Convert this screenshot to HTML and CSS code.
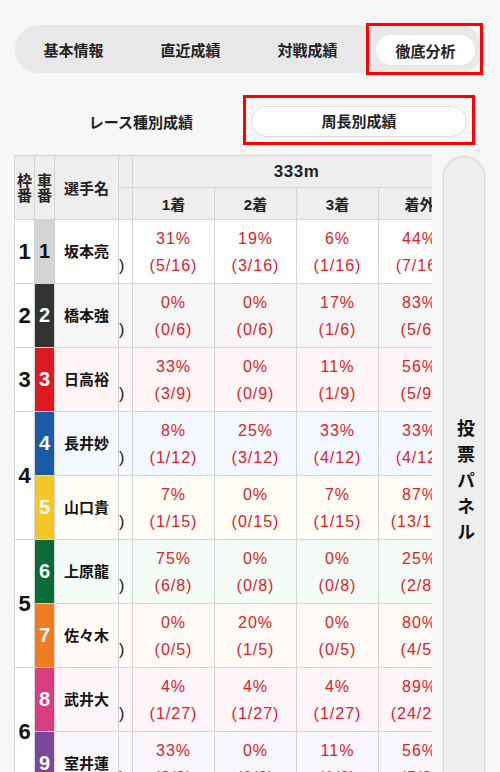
FILE: index.html
```html
<!DOCTYPE html>
<html lang="ja">
<head>
    <meta charset="UTF-8">
    <meta name="viewport" content="width=device-width, initial-scale=1.0">
    <title>徹底分析</title>
    <link rel="stylesheet" href="styles.css">
</head>
<body>
    <div class="tabs">
        <div class="tab">基本情報</div>
        <div class="tab">直近成績</div>
        <div class="tab">対戦成績</div>
        <div class="tab"><span class="tab-active marked">徹底分析</span></div>
    </div>
    <div class="subtabs">
        <div class="sub-label">レース種別成績</div>
        <div class="sub-pill marked2">周長別成績</div>
    </div>
    <div class="main">
        <div class="table-wrap">
            <table class="stats">
                <colgroup>
                    <col class="w-frame">
                    <col class="w-car">
                    <col class="w-name">
                    <col class="w-prev">
                    <col class="w-data">
                    <col class="w-data">
                    <col class="w-data">
                    <col class="w-data">
                </colgroup>
                <thead>
                    <tr class="h1">
                        <th rowspan="2" class="th-small">枠<br>番</th>
                        <th rowspan="2" class="th-small">車<br>番</th>
                        <th rowspan="2" class="th-name">選手名</th>
                        <th></th>
                        <th colspan="4" class="th-dist">333m</th>
                    </tr>
                    <tr class="h2">
                        <th></th>
                        <th>1着</th>
                        <th>2着</th>
                        <th>3着</th>
                        <th>着外</th>
                    </tr>
                </thead>
                <tbody>
                    <tr class="t1">
                        <td class="frame">1</td>
                        <td class="car c1">1</td>
                        <td class="name">坂本亮</td>
                        <td class="prev">&nbsp;<br>)</td>
                        <td>31%<br>(5/16)</td>
                        <td>19%<br>(3/16)</td>
                        <td>6%<br>(1/16)</td>
                        <td>44%<br>(7/16)</td>
                    </tr>
                    <tr class="t2">
                        <td class="frame">2</td>
                        <td class="car c2">2</td>
                        <td class="name">橋本強</td>
                        <td class="prev">&nbsp;<br>)</td>
                        <td>0%<br>(0/6)</td>
                        <td>0%<br>(0/6)</td>
                        <td>17%<br>(1/6)</td>
                        <td>83%<br>(5/6)</td>
                    </tr>
                    <tr class="t3">
                        <td class="frame">3</td>
                        <td class="car c3">3</td>
                        <td class="name">日高裕</td>
                        <td class="prev">&nbsp;<br>)</td>
                        <td>33%<br>(3/9)</td>
                        <td>0%<br>(0/9)</td>
                        <td>11%<br>(1/9)</td>
                        <td>56%<br>(5/9)</td>
                    </tr>
                    <tr class="t4">
                        <td class="frame" rowspan="2">4</td>
                        <td class="car c4">4</td>
                        <td class="name">長井妙</td>
                        <td class="prev">&nbsp;<br>)</td>
                        <td>8%<br>(1/12)</td>
                        <td>25%<br>(3/12)</td>
                        <td>33%<br>(4/12)</td>
                        <td>33%<br>(4/12)</td>
                    </tr>
                    <tr class="t5">
                        <td class="car c5">5</td>
                        <td class="name">山口貴</td>
                        <td class="prev">&nbsp;<br>)</td>
                        <td>7%<br>(1/15)</td>
                        <td>0%<br>(0/15)</td>
                        <td>7%<br>(1/15)</td>
                        <td>87%<br>(13/15)</td>
                    </tr>
                    <tr class="t6">
                        <td class="frame" rowspan="2">5</td>
                        <td class="car c6">6</td>
                        <td class="name">上原龍</td>
                        <td class="prev">&nbsp;<br>)</td>
                        <td>75%<br>(6/8)</td>
                        <td>0%<br>(0/8)</td>
                        <td>0%<br>(0/8)</td>
                        <td>25%<br>(2/8)</td>
                    </tr>
                    <tr class="t7">
                        <td class="car c7">7</td>
                        <td class="name">佐々木</td>
                        <td class="prev">&nbsp;<br>)</td>
                        <td>0%<br>(0/5)</td>
                        <td>20%<br>(1/5)</td>
                        <td>0%<br>(0/5)</td>
                        <td>80%<br>(4/5)</td>
                    </tr>
                    <tr class="t8">
                        <td class="frame" rowspan="2">6</td>
                        <td class="car c8">8</td>
                        <td class="name">武井大</td>
                        <td class="prev">&nbsp;<br>)</td>
                        <td>4%<br>(1/27)</td>
                        <td>4%<br>(1/27)</td>
                        <td>4%<br>(1/27)</td>
                        <td>89%<br>(24/27)</td>
                    </tr>
                    <tr class="t9">
                        <td class="car c9">9</td>
                        <td class="name">室井蓮</td>
                        <td class="prev">&nbsp;<br>)</td>
                        <td>33%<br>(3/9)</td>
                        <td>0%<br>(0/9)</td>
                        <td>11%<br>(1/9)</td>
                        <td>56%<br>(5/9)</td>
                    </tr>
                </tbody>
            </table>
        </div>
        <div class="vote">
            <span class="vote-text">投票パネル</span>
        </div>
    </div>
</body>
</html>
```

FILE: styles.css
```css
html, body {
    margin: 0;
    padding: 0;
    height: 772px;
    overflow: hidden;
}
body {
    font-family: "Liberation Sans", "Noto Sans CJK JP", sans-serif;
    background-color: #f7f7f7;
    color: #222;
}
/* タブ */
.tabs {
    display: flex;
    margin: 25px 17px 0 15px;
    height: 48px;
    background-color: #e8e8e8;
    border-radius: 24px;
}
.tab {
    flex: 1;
    display: flex;
    align-items: center;
    justify-content: center;
    font-size: 15px;
    font-weight: bold;
}
.tab-active {
    position: relative;
    display: flex;
    align-items: center;
    justify-content: center;
    width: 99px;
    height: 30px;
    margin: 2px 0 0 2px;
    background-color: #fff;
    border-radius: 15px;
}
.marked::after {
    content: "";
    position: absolute;
    top: -12px;
    bottom: -10px;
    left: -10px;
    right: -8px;
    border: 3px solid #f00;
}
.subtabs {
    display: flex;
    align-items: center;
    margin-top: 33px;
    padding-left: 33px;
}
.sub-label {
    width: 216px;
    text-align: center;
    font-size: 15px;
    font-weight: bold;
}
.sub-pill {
    position: relative;
    width: 214px;
    height: 29px;
    margin-left: 2px;
    line-height: 29px;
    text-align: center;
    font-size: 15px;
    font-weight: bold;
    background-color: #fff;
    border: 1px solid #ddd;
    border-radius: 16px;
}
.marked2::after {
    content: "";
    position: absolute;
    top: -12px;
    bottom: -9px;
    left: -9px;
    right: -9px;
    border: 3px solid #f00;
}
/* テーブル */
.main {
    display: flex;
    align-items: flex-start;
    gap: 11px;
    margin-top: 18px;
    padding-left: 14px;
}
.table-wrap {
    width: 418px;
    overflow: hidden;
    flex-shrink: 0;
}
.stats {
    table-layout: fixed;
    border-collapse: collapse;
    width: 446px;
}
.w-frame { width: 20px; }
.w-car { width: 20px; }
.w-name { width: 64px; }
.w-prev { width: 14px; }
.w-data { width: 82px; }
.stats th, .stats td {
    border: 1px solid #d4d4d4;
    padding: 0;
    text-align: center;
}
.stats th {
    background-color: #eee;
    font-weight: bold;
    font-size: 15px;
}
.h1, .h2 {
    height: 32px;
}
.th-small {
    font-size: 13px;
    line-height: 15px;
}
.th-name {
    font-size: 15px;
}
.stats th.th-dist {
    font-size: 17px;
    letter-spacing: 0.5px;
}
.stats tbody tr {
    height: 64px;
}
.stats td {
    color: #d9232a;
    font-size: 16px;
    letter-spacing: 1px;
    line-height: 27px;
    white-space: nowrap;
}
.stats td.frame {
    background-color: #fff;
    color: #111;
    font-size: 22px;
    font-weight: bold;
    letter-spacing: 0;
}
.stats td.car {
    color: #fff;
    font-size: 20px;
    font-weight: bold;
    letter-spacing: 0;
}
.stats td.name {
    color: #111;
    font-size: 15px;
    font-weight: bold;
    letter-spacing: 0;
}
.stats td.prev {
    color: #111;
    text-align: left;
    text-indent: -3px;
    overflow: hidden;
    border-left-color: #c4c4c4;
}
.stats td.c1 { background-color: #d4d4d4; color: #111; }
.stats td.c2 { background-color: #333; }
.stats td.c3 { background-color: #dd1a22; }
.stats td.c4 { background-color: #1a5ba8; }
.stats td.c5 { background-color: #f4c626; }
.stats td.c6 { background-color: #0b6b38; }
.stats td.c7 { background-color: #ee7d1f; }
.stats td.c8 { background-color: #d83d82; }
.stats td.c9 { background-color: #7a479b; }
.t1 td { background-color: #fff; }
.t2 td { background-color: #f6f6f6; }
.t3 td { background-color: #fff5f6; }
.t4 td { background-color: #f3f8fe; }
.t5 td { background-color: #fffdf5; }
.t6 td { background-color: #f5fcf7; }
.t7 td { background-color: #fffaf5; }
.t8 td { background-color: #fdf5f9; }
.t9 td { background-color: #f9f6fc; }
/* 投票パネル */
.vote {
    width: 42px;
    height: 660px;
    margin-top: 1px;
    background-color: #eee;
    border: 1px solid #d6d6d6;
    border-radius: 22px 22px 0 0;
    box-shadow: 0 0 3px rgba(0, 0, 0, 0.08);
    display: flex;
    justify-content: center;
    padding-top: 262px;
    box-sizing: border-box;
}
.vote-text {
    writing-mode: vertical-rl;
    font-size: 18px;
    font-weight: bold;
    letter-spacing: 8px;
    color: #111;
}
```
